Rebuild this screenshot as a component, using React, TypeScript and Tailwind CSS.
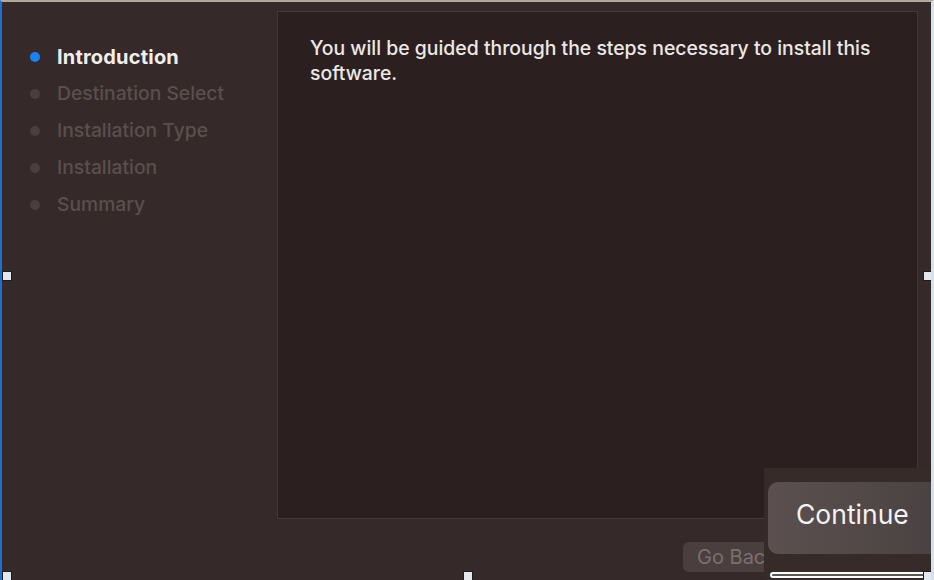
import React from 'react';

const steps = ['Introduction', 'Destination Select', 'Installation Type', 'Installation', 'Summary'];

const Handle = ({ className }: { className: string }) => (
  <div className={`absolute w-[10px] h-[10px] bg-[#e2e8ee] border border-[#1c1c1c] ${className}`} />
);

const App = () => {
  return (
    <div className="relative w-[934px] h-[580px] overflow-hidden bg-[#352a29] border-t-2 border-t-[#b3a999] border-l-2 border-l-[#1f6fd1] border-r-[3px] border-r-[#d4e2ee] font-['Inter','Liberation_Sans',sans-serif]">
      <div className="flex">
        {/* sidebar */}
        <div className="w-[275px] pt-[36px] pl-[28px]">
          {steps.map((s, i) => (
            <div key={s} className="flex items-center h-[37px] gap-[17px]">
              <span className={`block w-[10px] h-[10px] rounded-full ${i === 0 ? 'bg-[#1a82f7]' : 'bg-[#4a3f3e]'}`} />
              <span
                className={i === 0 ? 'text-[20px] font-bold text-[#f1eeee] tracking-[0.2px]' : 'text-[19.3px] font-medium text-[#5b4f4e]'}
              >
                {s}
              </span>
            </div>
          ))}
        </div>

        {/* content panel */}
        <div className="mt-[9px] w-[641px] h-[508px] bg-[#2b201f] border-[1.5px] border-[#433837] pl-[32px] pt-[24px]">
          <p className="text-[19.4px] leading-[25px] font-medium text-[#ece8e7] pr-[20px]">
            You will be guided through the steps necessary to install this software.
          </p>
        </div>
      </div>

      {/* footer */}
      <div className="flex pl-[681px] pt-[23px]">
        <div className="h-[30px] w-[110px] rounded-[6px] bg-[#4a3f3e] flex items-center pl-[14px] text-[20px] text-[#7c706f]">
          Go Back
        </div>
      </div>

      {/* continue popup overlay */}
      <div className="absolute left-[762px] top-[466px] w-[172px] h-[114px] bg-[#372b2a]">
        <div className="ml-[4px] mt-[14px] h-[72px] w-[200px] rounded-[10px] bg-gradient-to-r from-[#5b504f] to-[#474040] flex items-center pl-[28px] pb-[6px] text-[26.5px] text-[#f4f2f2]">
          Continue
        </div>
        <div className="ml-[6px] mt-[18px] w-[156px] h-[6px] rounded-full border-2 border-white bg-[#5c5656]" />
      </div>

      {/* selection handles */}
      <Handle className="left-[0px] top-[269px]" />
      <Handle className="right-[-2px] top-[269px]" />
      <Handle className="left-[0px] top-[569px]" />
      <Handle className="left-[461px] top-[569px]" />
      <Handle className="right-[-2px] top-[569px]" />
    </div>
  );
};

export default App;
